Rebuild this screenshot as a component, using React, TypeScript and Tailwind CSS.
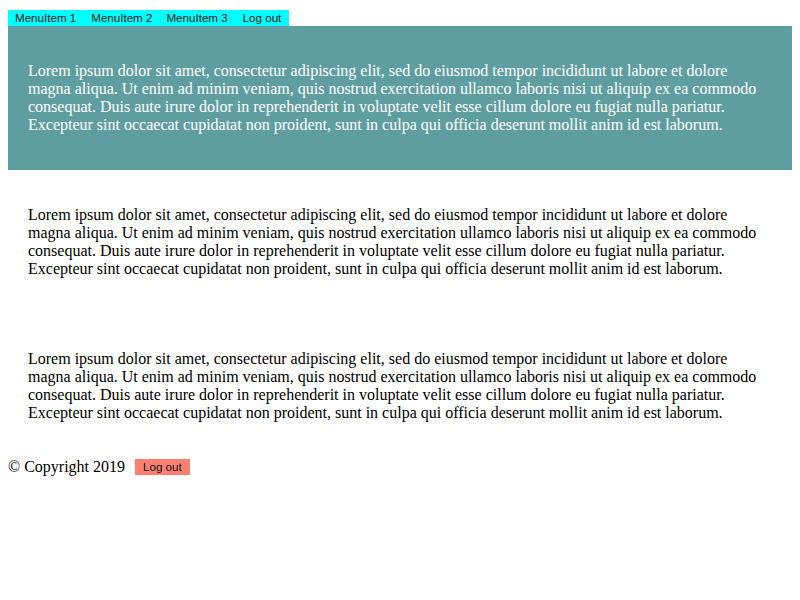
import React from "react";

const LOREM =
  "Lorem ipsum dolor sit amet, consectetur adipiscing elit, sed do eiusmod tempor incididunt ut labore et dolore magna aliqua. Ut enim ad minim veniam, quis nostrud exercitation ullamco laboris nisi ut aliquip ex ea commodo consequat. Duis aute irure dolor in reprehenderit in voluptate velit esse cillum dolore eu fugiat nulla pariatur. Excepteur sint occaecat cupidatat non proident, sunt in culpa qui officia deserunt mollit anim id est laborum.";

const btn =
  "h-[16px] leading-[16px] text-[11.6px] text-[#111] font-['Liberation_Sans',Arial,sans-serif]";

export default function App() {
  return (
    <div className="min-h-[600px] bg-white p-[8px] font-['Liberation_Serif','Times_New_Roman',serif] text-[16px] leading-[18px] text-black">
      <nav className="mt-[2px] flex w-fit bg-[#00ffff]">
        <button className={`${btn} pl-[7px] pr-[8px]`}>MenuItem 1</button>
        <button className={`${btn} px-[7px]`}>MenuItem 2</button>
        <button className={`${btn} px-[7px]`}>MenuItem 3</button>
        <button className={`${btn} pl-[8px] pr-[8px]`}>Log out</button>
      </nav>
      <section className="bg-[#5f9ea0] p-[20px] text-white">
        <p className="my-[16px]">{LOREM}</p>
      </section>
      <section className="p-[20px]">
        <p className="my-[16px]">{LOREM}</p>
      </section>
      <section className="p-[20px]">
        <p className="my-[16px]">{LOREM}</p>
      </section>
      <footer className="flex items-center">
        <span>© Copyright 2019</span>
        <button className={`${btn} ml-[10px] bg-[#fa8072] px-[8px]`}>Log out</button>
      </footer>
    </div>
  );
}
